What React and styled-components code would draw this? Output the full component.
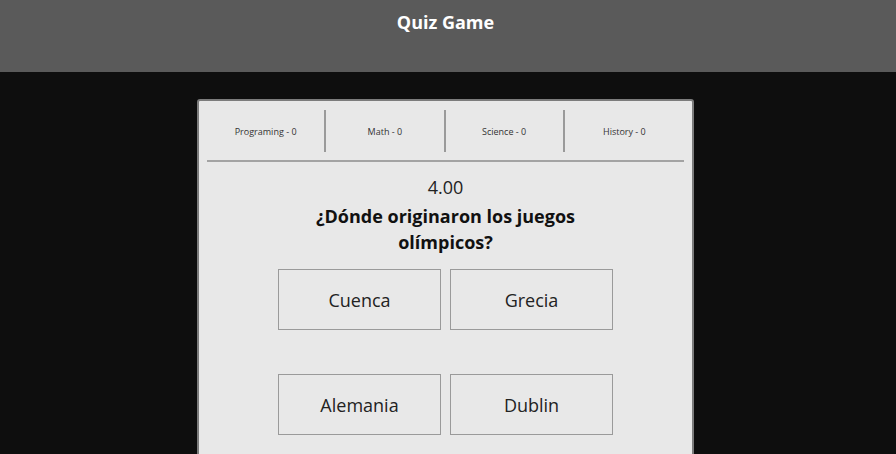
import React, { useState } from 'react';
import styled, { createGlobalStyle } from 'styled-components';

const GlobalStyle = createGlobalStyle`
    body {
        margin: 0;
        background-color: #0e0e0e;
        font-family: "Open Sans", "Noto Sans", sans-serif;
    }
`;

const Header = styled.header`
    height: 72px;
    background-color: #5a5a5a;
    display: flex;
    justify-content: center;
    padding: 10px 5px 0 0;
    box-sizing: border-box;
`;

const Title = styled.h1`
    margin: 0;
    color: #fff;
    font-size: 18px;
    font-weight: 700;
    line-height: 24px;
`;

const Card = styled.div`
    width: 497px;
    margin: 27px auto 0 calc(50% - 251px);
    box-sizing: border-box;
    background-color: #e8e8e8;
    border: 2px solid #7c7c7c;
    border-radius: 3px;
    padding: 9px 8px 24px;
`;

const Categories = styled.div`
    display: grid;
    grid-template-columns: repeat(4, 1fr);
    border-bottom: 2px solid #a3a3a3;
    padding-bottom: 8px;
`;

const Category = styled.div`
    height: 42px;
    display: flex;
    align-items: center;
    justify-content: center;
    font-size: 9px;
    color: #333;
    border-right: ${(props) => (props.last ? 'none' : '2px solid #9a9a9a')};
`;

const Timer = styled.div`
    text-align: center;
    font-size: 18px;
    line-height: 24px;
    color: #222;
    margin-top: 13px;
`;

const Question = styled.h2`
    margin: 4px auto 0;
    max-width: 290px;
    text-align: center;
    font-size: 18px;
    line-height: 26px;
    font-weight: 700;
    color: #111;
`;

const Answers = styled.div`
    display: grid;
    grid-template-columns: 163px 163px;
    column-gap: 9px;
    row-gap: 44px;
    justify-content: center;
    margin-top: 14px;
`;

const Answer = styled.button`
    height: 61px;
    background-color: #e8e8e8;
    border: 1px solid #9a9a9a;
    font-family: inherit;
    font-size: 18px;
    color: #222;
    cursor: pointer;

    &:hover {
        background-color: #dedede;
    }
`;

const categories = ['Programing', 'Math', 'Science', 'History'];
const answers = ['Cuenca', 'Grecia', 'Alemania', 'Dublin'];

function App() {
    const [scores] = useState([0, 0, 0, 0]);

    return (
        <>
            <GlobalStyle />
            <Header>
                <Title>Quiz Game</Title>
            </Header>
            <Card>
                <Categories>
                    {categories.map((name, i) => (
                        <Category key={name} last={i === categories.length - 1}>
                            {name} - {scores[i]}
                        </Category>
                    ))}
                </Categories>
                <Timer>4.00</Timer>
                <Question>¿Dónde originaron los juegos olímpicos?</Question>
                <Answers>
                    {answers.map((a) => (
                        <Answer key={a}>{a}</Answer>
                    ))}
                </Answers>
            </Card>
        </>
    );
}

export default App;
